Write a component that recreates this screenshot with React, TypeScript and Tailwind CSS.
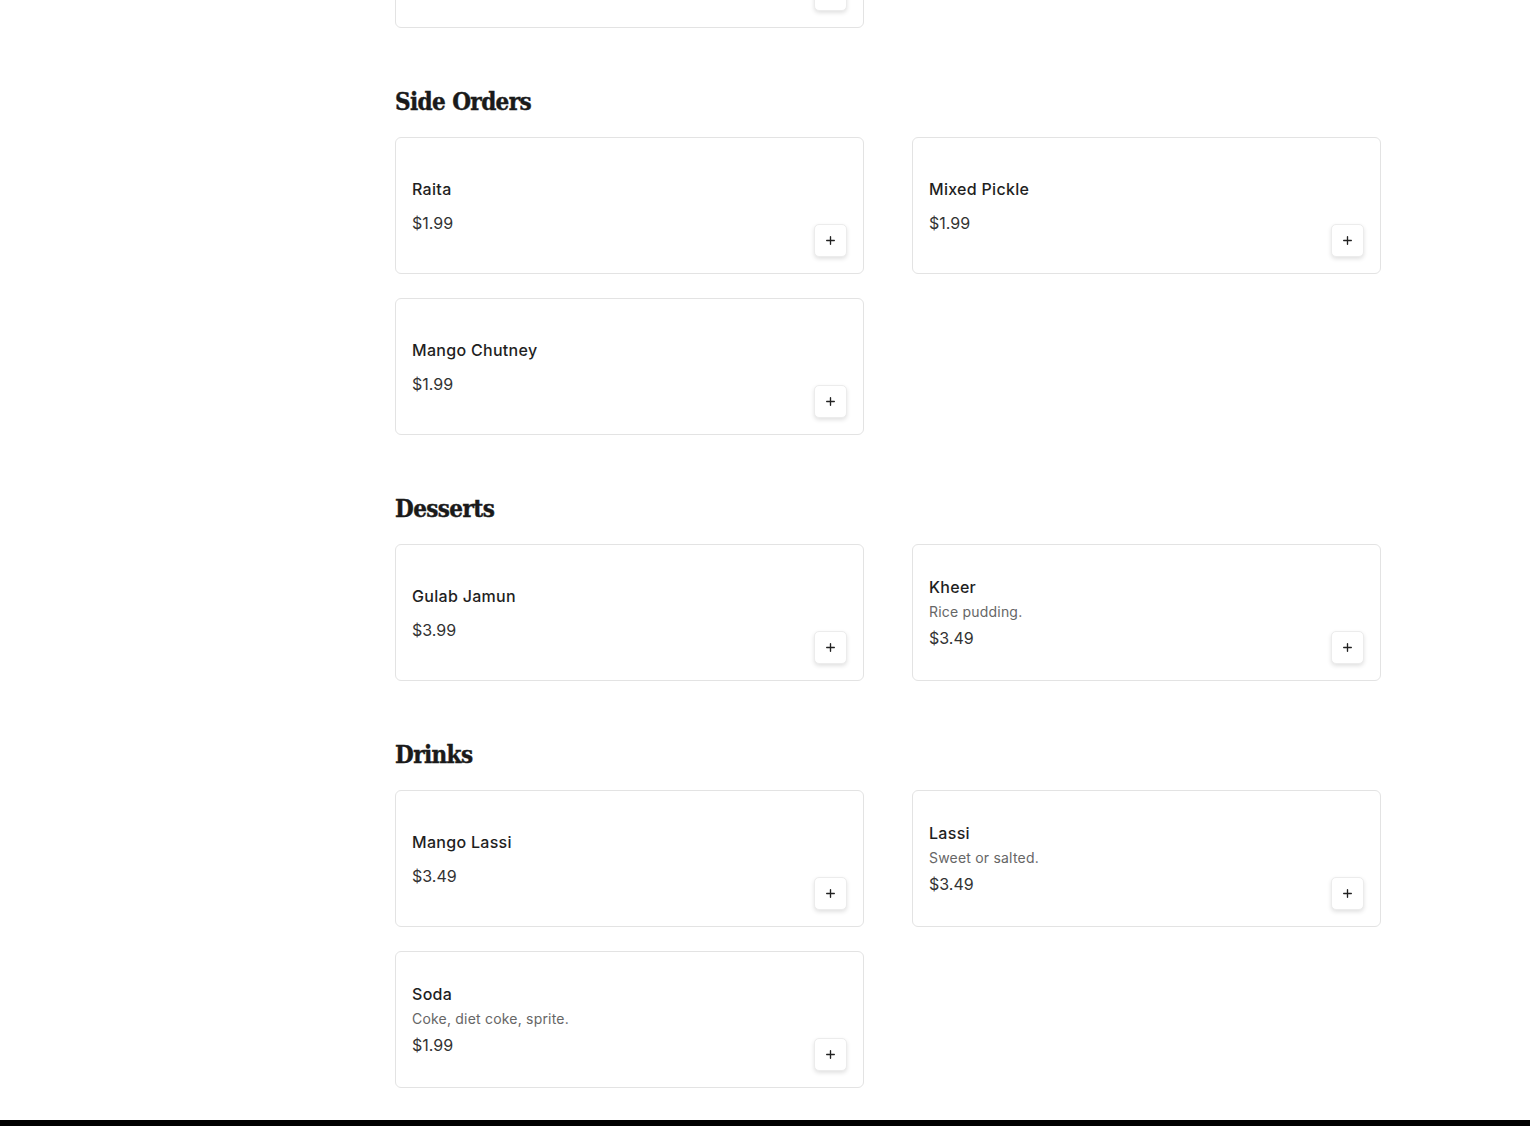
import { Plus } from 'lucide-react';

type Item = { name: string; price: string; desc?: string };

const sections: { title: string; items: Item[] }[] = [
  {
    title: 'Side Orders',
    items: [
      { name: 'Raita', price: '$1.99' },
      { name: 'Mixed Pickle', price: '$1.99' },
      { name: 'Mango Chutney', price: '$1.99' },
    ],
  },
  {
    title: 'Desserts',
    items: [
      { name: 'Gulab Jamun', price: '$3.99' },
      { name: 'Kheer', price: '$3.49', desc: 'Rice pudding.' },
    ],
  },
  {
    title: 'Drinks',
    items: [
      { name: 'Mango Lassi', price: '$3.49' },
      { name: 'Lassi', price: '$3.49', desc: 'Sweet or salted.' },
      { name: 'Soda', price: '$1.99', desc: 'Coke, diet coke, sprite.' },
    ],
  },
];

function ItemCard({ item }: { item: Item }) {
  return (
    <div className="flex h-[137px] items-center rounded-md border border-[#e3e3e3] bg-white p-4">
      <div className="flex-1 self-center">
        <h3 className="text-[16px] leading-[22px] font-medium tracking-[0.3px] text-[#1f1f1f]">{item.name}</h3>
        {item.desc ? (
          <>
            <p className="mt-[4px] text-[14px] leading-[20px] tracking-[0.2px] text-[#666]">{item.desc}</p>
            <p className="mt-[5px] text-[16px] leading-[22px] text-[#333]">{item.price}</p>
          </>
        ) : (
          <p className="mt-[12px] text-[16px] leading-[22px] text-[#333]">{item.price}</p>
        )}
      </div>
      <button
        type="button"
        aria-label={`Add ${item.name}`}
        className="flex h-[33px] w-[33px] items-center justify-center self-end rounded-[5px] border border-[#ececec] bg-white text-[#222] shadow-[0_2px_4px_rgba(0,0,0,0.12)]"
      >
        <Plus size={13} strokeWidth={2.5} />
      </button>
    </div>
  );
}

export default function App() {
  return (
    <div className="min-h-screen bg-white" style={{ fontFamily: 'Inter, "Open Sans", sans-serif' }}>
      <div className="flex">
        {/* left rail (empty at this scroll position) */}
        <aside className="w-[395px] shrink-0" />
        <main className="w-[986px] pb-[32px]">
          {/* tail of the previous section */}
          <div className="-mt-[109px] grid grid-cols-2 gap-x-12">
            <ItemCard item={{ name: 'Samosa', price: '$4.99' }} />
          </div>

          {sections.map((s) => (
            <section key={s.title} className="mt-[56px]">
              <h2
                className="mb-[17px] text-[24px] leading-[36px] font-bold tracking-[-0.6px] text-[#1a1a1a] [-webkit-text-stroke:0.4px_#1a1a1a]"
                style={{ fontFamily: '"DejaVu Serif Condensed", "DejaVu Serif", serif' }}
              >
                {s.title}
              </h2>
              <div className="grid grid-cols-2 gap-x-12 gap-y-6">
                {s.items.map((it) => (
                  <ItemCard key={it.name} item={it} />
                ))}
              </div>
            </section>
          ))}
        </main>
      </div>
      <footer className="h-[40px] bg-black" />
    </div>
  );
}
